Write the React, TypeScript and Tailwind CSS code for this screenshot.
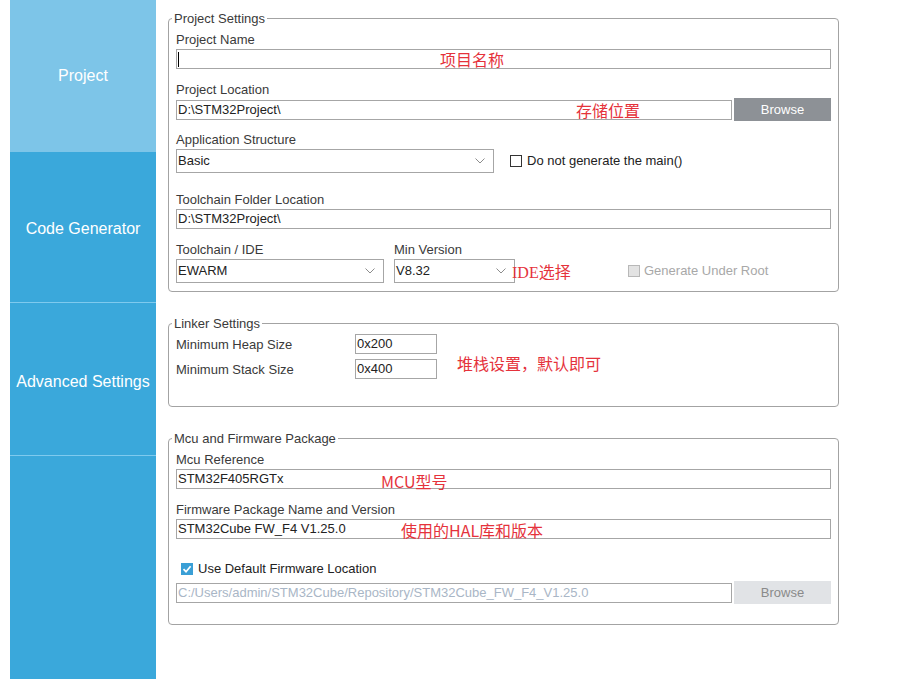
import React from 'react';

const Chevron = () => (
  <svg width="10" height="6" viewBox="0 0 10 6" className="shrink-0">
    <path d="M0.5 0.5 L5 5 L9.5 0.5" stroke="#8c8c8c" strokeWidth="1" fill="none" />
  </svg>
);

const Label: React.FC<{ children: React.ReactNode; className?: string }> = ({ children, className = '' }) => (
  <div className={`text-[13px] leading-[15px] text-[#3a3a3a] ${className}`}>{children}</div>
);

const Field: React.FC<{ children?: React.ReactNode; className?: string }> = ({ children, className = '' }) => (
  <div className={`relative h-[20px] border border-[#a6a6a6] bg-white flex items-center pl-[1px] text-[13px] text-[#222] whitespace-nowrap ${className}`}>
    {children}
  </div>
);

const Select: React.FC<{ value: string; className?: string }> = ({ value, className = '' }) => (
  <div className={`h-[24px] border border-[#a6a6a6] bg-white flex items-center justify-between pl-[1px] pr-[8px] text-[13px] text-[#222] ${className}`}>
    <span>{value}</span>
    <Chevron />
  </div>
);

const Note: React.FC<{ children: React.ReactNode; className?: string }> = ({ children, className = '' }) => (
  <span className={`font-['Noto_Sans_CJK_SC',sans-serif] text-[16px] leading-[20px] text-[#e5323b] whitespace-nowrap ${className}`}>
    {children}
  </span>
);

const Group: React.FC<{ title: string; children: React.ReactNode; className?: string }> = ({ title, children, className = '' }) => (
  <fieldset className={`min-w-0 border border-[#a3a3a3] rounded-[4px] pl-[3px] pr-[7px] ${className}`}>
    <legend className="px-[2px] text-[13px] leading-[15px] text-[#3a3a3a]">{title}</legend>
    <div className="pl-[4px]">{children}</div>
  </fieldset>
);

const App: React.FC = () => {
  return (
    <div className="h-screen w-full bg-white flex font-['Liberation_Sans',Arial,sans-serif] overflow-hidden">
      {/* 左侧导航 */}
      <div className="ml-[10px] w-[146px] h-full flex flex-col bg-[#3aa8db] text-white text-[16px]">
        <div className="h-[152px] shrink-0 bg-[#7dc5e8] flex items-center justify-center">Project</div>
        <div className="h-[151px] shrink-0 pt-[3px] border-b border-[#7fcaee] flex items-center justify-center">Code Generator</div>
        <div className="h-[153px] shrink-0 pt-[5px] border-b border-[#7fcaee] flex items-center justify-center">Advanced Settings</div>
        <div className="flex-1" />
      </div>

      {/* 设置面板 */}
      <div className="ml-[12px] w-[671px] pt-[11px]">
        <Group title="Project Settings" className="pb-[8px]">
          <Label className="mt-[6px] mb-[2px]">Project Name</Label>
          <Field>
            <span className="w-px h-[15px] bg-black" />
            <Note className="absolute left-[263px] top-1/2 -translate-y-1/2">项目名称</Note>
          </Field>

          <Label className="mt-[13px] mb-[1px]">Project Location</Label>
          <div className="flex items-center h-[23px]">
            <Field className="flex-1">
              D:\STM32Project\
              <Note className="absolute left-[399px] top-1/2 -translate-y-1/2">存储位置</Note>
            </Field>
            <div className="ml-[2px] w-[97px] h-[23px] bg-[#8d9196] text-white text-[13px] flex items-center justify-center">Browse</div>
          </div>

          <Label className="mt-[11px] mb-[2px]">Application Structure</Label>
          <div className="flex items-center">
            <Select value="Basic" className="w-[318px]" />
            <span className="ml-[16px] w-[12px] h-[12px] border border-[#333] bg-white" />
            <span className="ml-[5px] text-[13px] text-[#222]">Do not generate the main()</span>
          </div>

          <Label className="mt-[19px] mb-[2px]">Toolchain Folder Location</Label>
          <Field>D:\STM32Project\</Field>

          <div className="mt-[13px] flex items-end">
            <div className="w-[208px]">
              <Label className="mb-[2px]">Toolchain / IDE</Label>
              <Select value="EWARM" />
            </div>
            <div className="ml-[10px] w-[121px]">
              <Label className="mb-[2px]">Min Version</Label>
              <Select value="V8.32" />
            </div>
            <div className="h-[24px] flex items-center">
              <Note className="ml-[-3px] w-[116px] mt-[2px]">
                <span className="font-['Liberation_Serif',serif]">IDE</span>选择
              </Note>
              <span className="w-[12px] h-[12px] border border-[#b8b8b8] bg-[#e3e3e3]" />
              <span className="ml-[4px] text-[13px] text-[#a8a8a8]">Generate Under Root</span>
            </div>
          </div>
        </Group>

        <Group title="Linker Settings" className="mt-[24px] pb-[27px]">
          <div className="flex items-start">
            <div className="mt-[3px]">
              <div className="flex items-center h-[20px]">
                <Label className="w-[179px]">Minimum Heap Size</Label>
                <Field className="w-[82px]">0x200</Field>
              </div>
              <div className="flex items-center h-[20px] mt-[5px]">
                <Label className="w-[179px]">Minimum Stack Size</Label>
                <Field className="w-[82px]">0x400</Field>
              </div>
            </div>
            <Note className="ml-[20px] mt-[22px]">堆栈设置，默认即可</Note>
          </div>
        </Group>

        <Group title="Mcu and Firmware Package" className="mt-[24px] pb-[20px]">
          <Label className="mt-[6px] mb-[2px]">Mcu Reference</Label>
          <Field>
            STM32F405RGTx
            <Note className="absolute left-[204px] top-1/2 -translate-y-[40%]">MCU型号</Note>
          </Field>

          <Label className="mt-[13px] mb-[2px]">Firmware Package Name and Version</Label>
          <Field>
            STM32Cube FW_F4 V1.25.0
            <Note className="absolute left-[224px] top-1/2 -translate-y-[45%]">使用的HAL库和版本</Note>
          </Field>

          <div className="mt-[22px] h-[16px] flex items-center">
            <svg width="12" height="12" viewBox="0 0 12 12" className="ml-[5px]">
              <rect width="12" height="12" fill="#3a9fd6" />
              <path d="M2.5 6.2 L5 8.7 L9.6 3.2" stroke="#fff" strokeWidth="1.7" fill="none" />
            </svg>
            <span className="ml-[5px] text-[13px] text-[#222]">Use Default Firmware Location</span>
          </div>

          <div className="mt-[4px] flex items-center h-[23px]">
            <Field className="flex-1 text-[#a9b6c6]">C:/Users/admin/STM32Cube/Repository/STM32Cube_FW_F4_V1.25.0</Field>
            <div className="ml-[2px] w-[97px] h-[23px] bg-[#e1e3e6] text-[#8a8a8a] text-[13px] flex items-center justify-center">Browse</div>
          </div>
        </Group>
      </div>
    </div>
  );
};

export default App;
